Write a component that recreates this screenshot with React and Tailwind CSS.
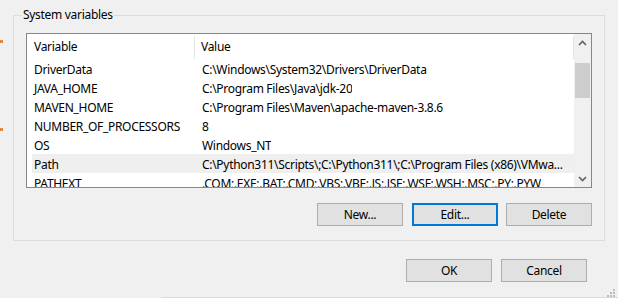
const rows = [
  ['DriverData', 'C:\\Windows\\System32\\Drivers\\DriverData'],
  ['JAVA_HOME', 'C:\\Program Files\\Java\\jdk-20'],
  ['MAVEN_HOME', 'C:\\Program Files\\Maven\\apache-maven-3.8.6'],
  ['NUMBER_OF_PROCESSORS', '8'],
  ['OS', 'Windows_NT'],
  ['Path', 'C:\\Python311\\Scripts\\;C:\\Python311\\;C:\\Program Files (x86)\\VMwa...'],
  ['PATHEXT', '.COM;.EXE;.BAT;.CMD;.VBS;.VBE;.JS;.JSE;.WSF;.WSH;.MSC;.PY;.PYW'],
];

function Chevron({ down }) {
  return (
    <svg width="9" height="6" viewBox="0 0 9 6" className={down ? 'rotate-180' : ''}>
      <path d="M1 5 L4.5 1.5 L8 5" fill="none" stroke="#606060" strokeWidth="1.6" />
    </svg>
  );
}

function Button({ children, focused }) {
  return (
    <button
      className={
        'w-[86px] h-[23px] bg-[#e1e1e1] flex items-center justify-center text-black leading-none ' +
        (focused ? 'border-2 border-[#0078d7]' : 'border border-[#adadad]')
      }
    >
      {children}
    </button>
  );
}

export default function App() {
  return (
    <div className="relative w-[618px] h-[298px] overflow-hidden bg-[#f0f0f0] text-[12px] tracking-[-0.3px] text-black font-['Noto_Sans',sans-serif]">
      {/* cut-off marks from the group on the left */}
      <div className="absolute left-0 top-[40px] w-[3px] h-[3px] bg-[#e08a3c]" />
      <div className="absolute left-0 top-[128px] w-[3px] h-[3px] bg-[#e08a3c]" />

      {/* System variables group */}
      <div className="relative ml-[13px] mt-[15px] w-[592px] h-[226px] border border-[#dcdcdc] pt-[17px] px-[12px]">
        <span className="absolute -top-[9px] left-[8px] bg-[#f0f0f0] px-[1px] leading-[16px]">System variables</span>

        <div className="flex w-[566px] h-[155px] border border-[#828790] bg-white">
          <div className="flex-1 flex flex-col overflow-hidden">
            <div className="flex h-[25px] items-center shrink-0 pt-[1px]">
              <div className="w-[168px] h-[23px] flex items-center pl-[7px] border-r border-[#e5e5e5]">Variable</div>
              <div className="flex-1 h-[23px] flex items-center pl-[6px] border-r border-[#e5e5e5]">Value</div>
            </div>
            <div className="pl-[5px]">
              {rows.map(([name, value]) => (
                <div
                  key={name}
                  className={'flex h-[19px] items-center pl-[2px] pt-[2px] whitespace-nowrap ' + (name === 'Path' ? 'bg-[#efefef]' : '')}
                >
                  <div className="w-[168px] shrink-0">{name}</div>
                  <div className="overflow-hidden">{value}</div>
                </div>
              ))}
            </div>
          </div>

          {/* scrollbar */}
          <div className="w-[17px] h-full bg-[#f0f0f0] flex flex-col shrink-0">
            <div className="h-[17px] flex items-center justify-center">
              <Chevron />
            </div>
            <div className="flex-1 px-[1px] pt-[12px]">
              <div className="h-[35px] bg-[#cdcdcd]" />
            </div>
            <div className="h-[17px] flex items-center justify-center">
              <Chevron down />
            </div>
          </div>
        </div>

        <div className="flex justify-end mt-[15px]">
          <Button>New...</Button>
          <div className="ml-[9px]">
            <Button focused>Edit...</Button>
          </div>
          <div className="ml-[8px]">
            <Button>Delete</Button>
          </div>
        </div>
      </div>

      {/* dialog buttons */}
      <div className="flex justify-end mt-[18px] pr-[31px] gap-[9px]">
        <Button>OK</Button>
        <Button>Cancel</Button>
      </div>

      <div className="absolute right-[3px] bottom-[1px] grid grid-cols-3 gap-[1px]">
        <span />
        <span />
        <span className="w-[2px] h-[2px] bg-[#bcbcbc]" />
        <span />
        <span className="w-[2px] h-[2px] bg-[#bcbcbc]" />
        <span className="w-[2px] h-[2px] bg-[#bcbcbc]" />
        <span className="w-[2px] h-[2px] bg-[#bcbcbc]" />
        <span className="w-[2px] h-[2px] bg-[#bcbcbc]" />
        <span className="w-[2px] h-[2px] bg-[#bcbcbc]" />
      </div>
      <div className="absolute left-[161px] right-0 bottom-0 h-[1px] bg-[#d9d9d9]" />
    </div>
  );
}
